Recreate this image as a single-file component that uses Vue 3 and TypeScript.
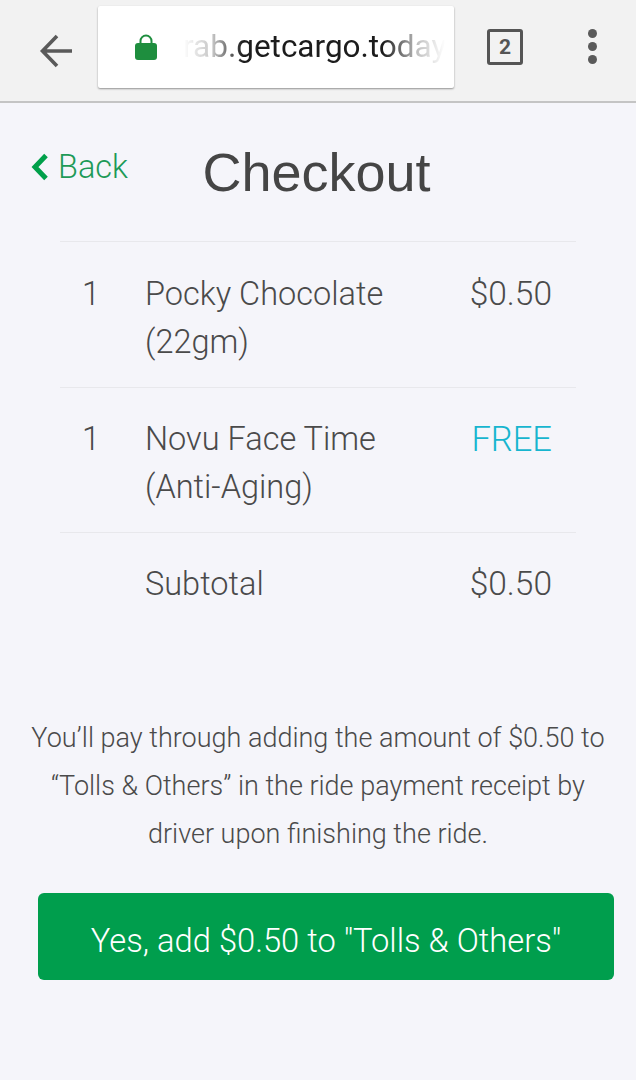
<script setup lang="ts">
interface Item {
  qty: number
  name: string[]
  price: string
  free?: boolean
}

const items: Item[] = [
  { qty: 1, name: ['Pocky Chocolate', '(22gm)'], price: '$0.50' },
  { qty: 1, name: ['Novu Face Time', '(Anti-Aging)'], price: 'FREE', free: true },
]
</script>

<template>
  <div class="page">
    <header class="toolbar">
      <svg class="back-arrow" width="36" height="36" viewBox="0 0 36 36">
        <path d="M33 18H5M18 3 3.500 18 18 33" fill="none" stroke="#5a5a5a" stroke-width="3.600" />
      </svg>
      <div class="omnibox">
        <svg class="lock" width="24" height="28" viewBox="0 0 24 28">
          <path d="M6.500 11V8a5.500 5.500 0 0 1 11 0v3" fill="none" stroke="#1e8e3e" stroke-width="2" />
          <rect x="1" y="10" width="22" height="17" rx="3" fill="#1e8e3e" />
        </svg>
        <div class="url">rab.getcargo.today</div>
      </div>
      <div class="tabs">2</div>
      <div class="dots"><i></i><i></i><i></i></div>
    </header>

    <main class="content">
      <div class="head">
        <a class="back">
          <svg width="20" height="30" viewBox="0 0 20 30">
            <path d="M16 3.500 5 15l11 11.500" fill="none" stroke="#00a04a" stroke-width="5" />
          </svg>
          Back
        </a>
        <h1>Checkout</h1>
      </div>

      <div class="lines">
        <div v-for="(item, i) in items" :key="i" class="line">
          <div class="qty">{{ item.qty }}</div>
          <div class="name">
            <div v-for="n in item.name" :key="n">{{ n }}</div>
          </div>
          <div class="price" :class="{ free: item.free }">{{ item.price }}</div>
        </div>
        <div class="line">
          <div class="qty"></div>
          <div class="name">Subtotal</div>
          <div class="price">$0.50</div>
        </div>
      </div>

      <p class="note">
        You’ll pay through adding the amount of $0.50 to<br />
        “Tolls &amp; Others” in the ride payment receipt by<br />
        driver upon finishing the ride.
      </p>

      <button class="confirm">Yes, add $0.50 to "Tolls &amp; Others"</button>
    </main>
  </div>
</template>

<style scoped>
.page {
  width: 636px;
  height: 1080px;
  overflow: hidden;
  background: #f5f5fa;
  font-family: Roboto, "Liberation Sans", sans-serif;
  display: flex;
  flex-direction: column;
}

.toolbar {
  height: 101px;
  flex: none;
  background: #f2f2f2;
  border-bottom: 2px solid #c4c4c4;
  display: flex;
  align-items: center;
  padding-left: 39px;
  box-sizing: content-box;
}

.back-arrow {
  flex: none;
  margin-right: 23px;
}

.omnibox {
  width: 356px;
  height: 82px;
  flex: none;
  margin-top: -7px;
  background: #fff;
  border-radius: 2px;
  box-shadow: 0 1px 2px rgba(0, 0, 0, 0.4);
  display: flex;
  align-items: center;
  padding-left: 36px;
  box-sizing: border-box;
}

.lock {
  flex: none;
  margin-right: 25px;
}

.url {
  width: 262px;
  margin-top: -2px;
  overflow: hidden;
  white-space: nowrap;
  font-size: 31.500px;
  color: #1c1c1c;
  -webkit-mask-image: linear-gradient(to right, transparent 0, #0004 30px, #000 60px, #000 200px, #0004 235px, transparent 262px);
  mask-image: linear-gradient(to right, transparent 0, #0004 30px, #000 60px, #000 200px, #0004 235px, transparent 262px);
}

.tabs {
  width: 36px;
  height: 36px;
  margin-left: 33px;
  margin-top: -8px;
  border: 3px solid #555;
  border-radius: 3px;
  display: flex;
  align-items: center;
  justify-content: center;
  font-size: 21px;
  font-weight: 700;
  color: #555;
  box-sizing: border-box;
}

.dots {
  margin-left: 65px;
  margin-top: -8px;
  display: flex;
  flex-direction: column;
  gap: 4px;
}

.dots i {
  width: 9px;
  height: 9px;
  border-radius: 50%;
  background: #5a5a5a;
}

.content {
  flex: 1;
  color: #4a4a4a;
}

.head {
  height: 138px;
  display: flex;
  position: relative;
  justify-content: center;
  padding-right: 3px;
}

.back {
  position: absolute;
  left: 30px;
  top: 45px;
  display: flex;
  align-items: center;
  gap: 8px;
  font-size: 32.500px;
  font-weight: 300;
  color: #1d9a57;
}

h1 {
  margin: 39px 0 0;
  font-size: 54px;
  line-height: 60px;
  font-weight: 400;
  color: #454545;
  font-family: "Liberation Sans", sans-serif;
}

.lines {
  margin: 0 60px;
  padding-top: 1px;
  border-top: 1px solid #e8e8ec;
}

.line {
  display: flex;
  padding: 27px 24px 21px 22px;
  font-size: 32.500px;
  font-weight: 300;
  line-height: 48px;
  border-bottom: 1px solid #e8e8ec;
}

.line:last-child {
  border-bottom: none;
}

.qty {
  width: 63px;
  flex: none;
}

.name {
  flex: 1;
}

.price {
  font-size: 33.500px;
}

.price.free {
  color: #17b5cf;
  font-size: 34.500px;
}

.note {
  margin: 85px 0 0;
  text-align: center;
  font-size: 27px;
  font-weight: 300;
  line-height: 48px;
  color: #4a4a4a;
}

.confirm {
  display: block;
  width: 576px;
  height: 87px;
  margin: 35px 0 0 38px;
  padding-top: 9px;
  border: none;
  border-radius: 6px;
  background: #009e4d;
  color: #fff;
  font-family: inherit;
  font-size: 32.700px;
  font-weight: 300;
}
</style>
